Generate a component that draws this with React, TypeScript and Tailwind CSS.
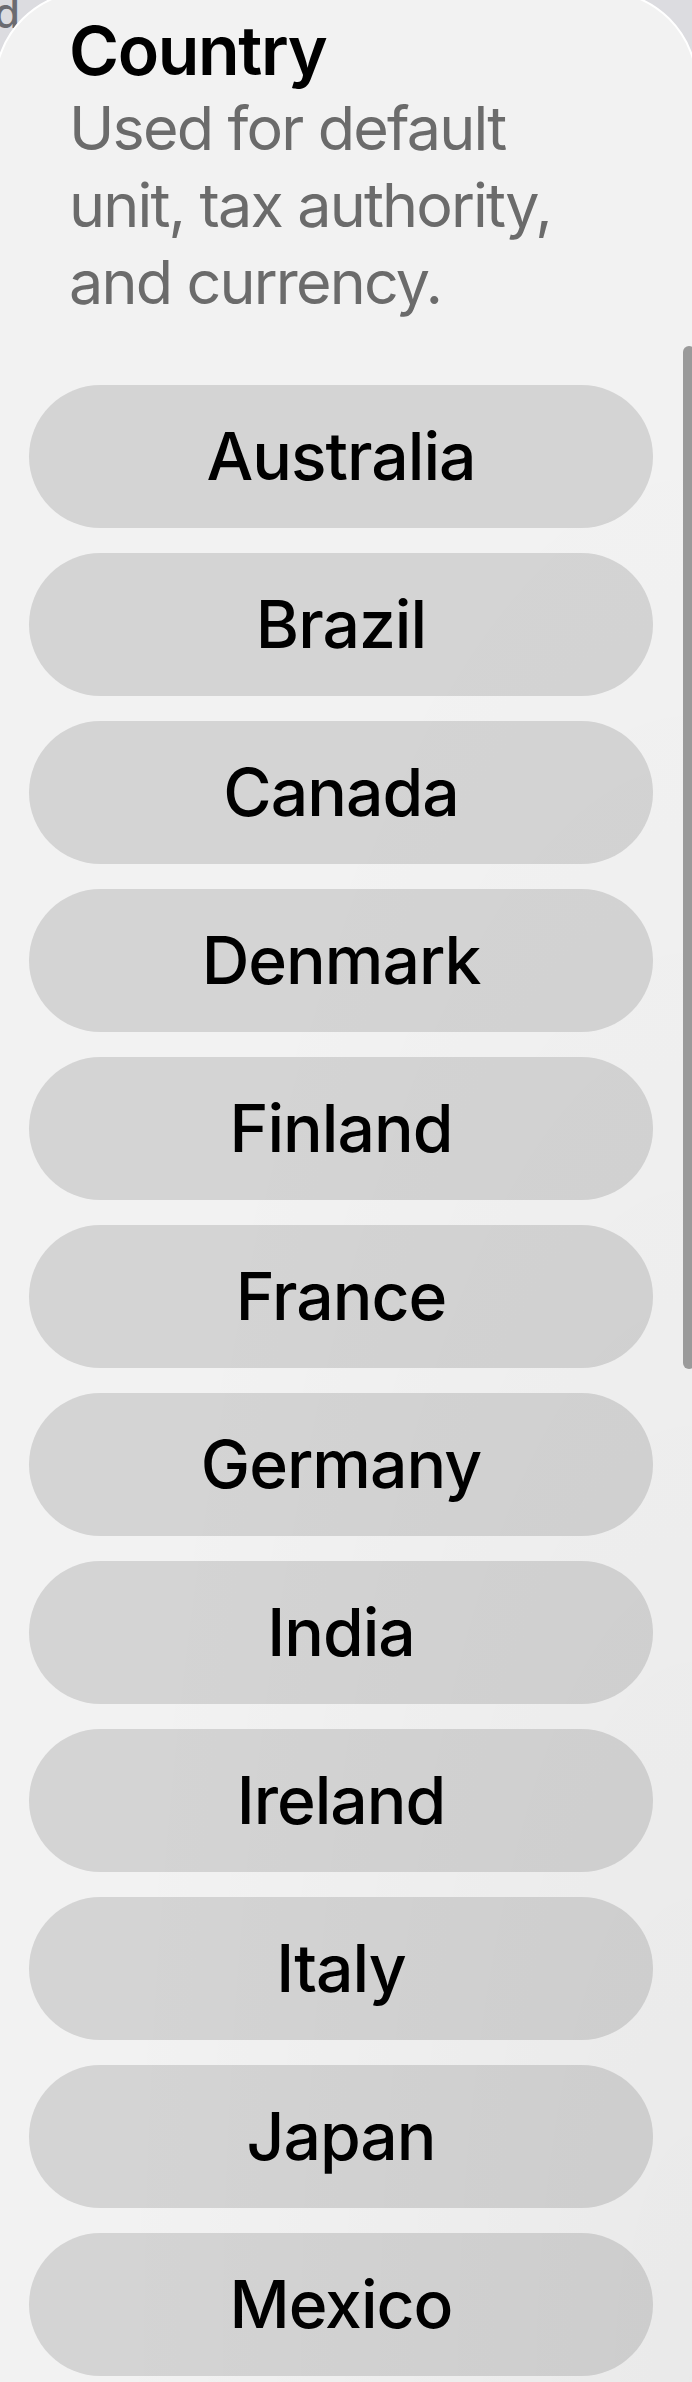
import React from "react";

const countries = [
  "Australia",
  "Brazil",
  "Canada",
  "Denmark",
  "Finland",
  "France",
  "Germany",
  "India",
  "Ireland",
  "Italy",
  "Japan",
  "Mexico",
];

export default function App() {
  return (
    <div className="relative w-[692px] h-[2382px] overflow-hidden bg-[#dcdce0] font-['Inter','Noto_Sans',sans-serif]">
      <span className="absolute left-[-6px] top-[-8px] text-[42px] leading-none font-medium text-[#6b6b70]">
        d
      </span>
      <div className="relative -mx-[6px] -mt-[10px] h-[2420px] rounded-t-[96px] border-2 border-white bg-[#f2f2f2] pl-[33px] pt-[18px]">
        <div className="ml-[40px] w-[540px]">
          <h1 className="text-[68px] leading-[80px] font-semibold tracking-[-0.02em] text-black">
            Country
          </h1>
          <p className="text-[61px] leading-[77px] font-normal tracking-[-0.03em] text-[#6b6b6b]">
            Used for default unit, tax authority, and currency.
          </p>
        </div>
        <div className="mt-[64px] flex flex-col gap-[25px]">
          {countries.map((c) => (
            <button
              key={c}
              className="flex h-[143px] w-[624px] items-center justify-center rounded-full bg-[#d4d4d4] text-[66px] font-medium tracking-[-0.015em] text-black"
            >
              {c}
            </button>
          ))}
        </div>
      </div>
      <div className="pointer-events-none absolute inset-0 bg-[radial-gradient(ellipse_at_100%_100%,rgba(0,0,0,0.035),transparent_60%)]" />
      <div className="absolute left-[683px] top-[346px] h-[1023px] w-[12px] rounded-full bg-[#9a9a9a]" />
    </div>
  );
}
